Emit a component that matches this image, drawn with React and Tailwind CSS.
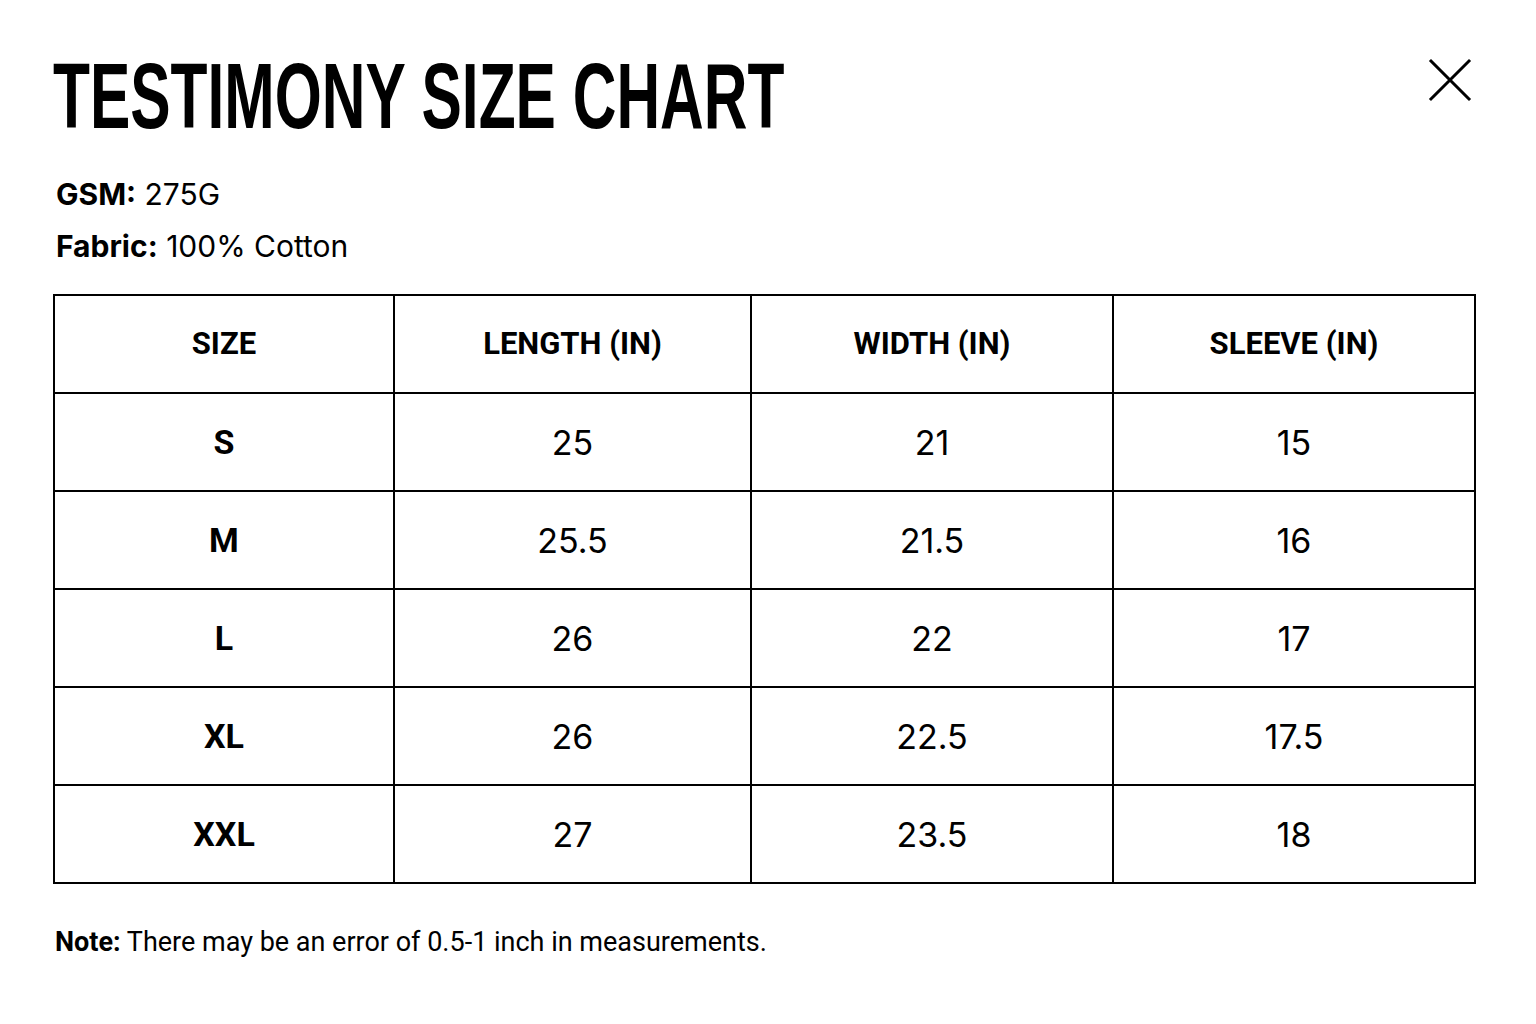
import React from "react";

const rows = [
    ["S", "25", "21", "15"],
    ["M", "25.5", "21.5", "16"],
    ["L", "26", "22", "17"],
    ["XL", "26", "22.5", "17.5"],
    ["XXL", "27", "23.5", "18"],
];

const headers = ["SIZE", "LENGTH (IN)", "WIDTH (IN)", "SLEEVE (IN)"];

export default function App() {
    return (
        <div className="min-h-screen w-[1536px] bg-white text-black px-[53px] pt-[52px] font-['Inter','Liberation_Sans',sans-serif]">
            {/* header */}
            <div className="flex items-start justify-between">
                <h1 className="h-[88px] overflow-visible">
                    <span className="inline-block origin-left scale-x-[0.63] scale-y-[0.97] font-['Liberation_Sans',sans-serif] font-bold text-[96px] leading-[88px] whitespace-nowrap">
                        TESTIMONY SIZE CHART
                    </span>
                </h1>
                <button className="mt-[6px] mr-[11px] w-[44px] h-[44px] flex items-center justify-center">
                    <svg width="44" height="44" viewBox="0 0 44 44" fill="none" stroke="black" strokeWidth="3" strokeLinecap="square">
                        <path d="M3 3 L41 41 M41 3 L3 41" />
                    </svg>
                </button>
            </div>

            {/* specs */}
            <div className="mt-[28px] text-[30px] leading-[52px] pl-[3px]">
                <p><b className="font-bold">GSM:</b> 275G</p>
                <p><b className="font-bold">Fabric:</b> 100% Cotton</p>
            </div>

            {/* table */}
            <table className="mt-[22px] border-collapse border-2 border-black w-[1421px] table-fixed">
                <colgroup>
                    <col className="w-[340px]" />
                    <col className="w-[357px]" />
                    <col className="w-[362px]" />
                    <col className="w-[362px]" />
                </colgroup>
                <thead>
                    <tr className="h-[98px]">
                        {headers.map((h) => (
                            <th key={h} className="border-2 border-black text-center font-bold text-[31px] font-['Roboto',sans-serif]">
                                {h}
                            </th>
                        ))}
                    </tr>
                </thead>
                <tbody>
                    {rows.map((r) => (
                        <tr key={r[0]} className="h-[98px]">
                            <td className="border-2 border-black text-center font-bold text-[34px] font-['Roboto',sans-serif]">{r[0]}</td>
                            <td className="border-2 border-black text-center text-[34px]">{r[1]}</td>
                            <td className="border-2 border-black text-center text-[34px]">{r[2]}</td>
                            <td className="border-2 border-black text-center text-[34px]">{r[3]}</td>
                        </tr>
                    ))}
                </tbody>
            </table>

            {/* note */}
            <p className="mt-[38px] text-[27px] font-['Roboto',sans-serif] pl-[2px]">
                <b className="font-bold">Note:</b> There may be an error of 0.5-1 inch in measurements.
            </p>
        </div>
    );
}
